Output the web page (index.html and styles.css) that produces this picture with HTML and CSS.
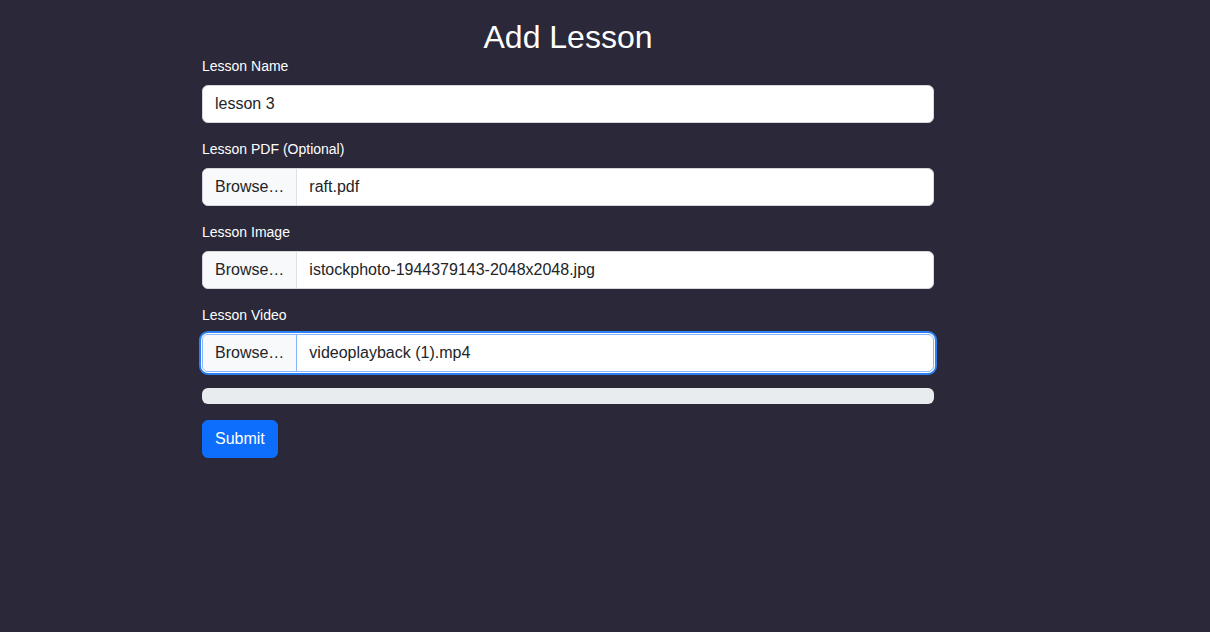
FILE: index.html
```html
<!DOCTYPE html>
<html lang="en">
<head>
<meta charset="utf-8">
<title>Add Lesson</title>
<link rel="stylesheet" href="styles.css">
</head>
<body>
<main class="container">
  <h1 class="title">Add Lesson</h1>
  <form class="form">
    <div class="field">
      <label class="form-label">Lesson Name</label>
      <div class="form-control">lesson 3</div>
    </div>
    <div class="field">
      <label class="form-label">Lesson PDF (Optional)</label>
      <div class="form-control file"><span class="file-btn">Browse…</span><span class="file-name">raft.pdf</span></div>
    </div>
    <div class="field">
      <label class="form-label">Lesson Image</label>
      <div class="form-control file"><span class="file-btn">Browse…</span><span class="file-name">istockphoto-1944379143-2048x2048.jpg</span></div>
    </div>
    <div class="field">
      <label class="form-label">Lesson Video</label>
      <div class="form-control file focused"><span class="file-btn">Browse…</span><span class="file-name">videoplayback (1).mp4</span></div>
    </div>
    <div class="progress"></div>
    <button type="button" class="btn-primary">Submit</button>
  </form>
</main>
</body>
</html>
```
FILE: styles.css
```css
html, body {
  margin: 0;
  padding: 0;
}
body {
  background: #2a2839;
  font-family: "Liberation Sans", Arial, sans-serif;
  color: #fff;
  height: 632px;
}
.container {
  width: 732px;
  margin-left: 202px;
}
.title {
  margin: 18px 0 0;
  font-size: 32px;
  line-height: 38px;
  font-weight: 400;
  text-align: center;
}
.form {
  display: flex;
  flex-direction: column;
}
.field {
  display: flex;
  flex-direction: column;
  margin-bottom: 16px;
}
.form-label {
  font-size: 14px;
  line-height: 21px;
  margin-bottom: 8px;
  color: #fff;
}
.form-control {
  box-sizing: border-box;
  height: 38px;
  background: #fff;
  border: 1px solid #d3d7dc;
  border-radius: 6px;
  padding: 6px 12px;
  font-size: 16px;
  line-height: 24px;
  color: #212529;
  white-space: nowrap;
}
.form-control.file {
  display: flex;
  padding: 0;
  overflow: hidden;
}
.file-btn {
  padding: 6px 12px;
  background: #f8f9fa;
  border-right: 1px solid #dee2e6;
  color: #212529;
}
.file-name {
  padding: 6px 12px;
}
.form-control.focused {
  border-color: #86b7fe;
  box-shadow: 0 0 0 1px #fff, 0 0 0 3px #2b80f6;
}
.form-control.focused .file-btn {
  border-right-color: #86b7fe;
}
.progress {
  height: 16px;
  background: #e9ecef;
  border-radius: 6px;
  margin-bottom: 16px;
}
.btn-primary {
  align-self: flex-start;
  height: 38px;
  padding: 6px 12px;
  background: #0d6efd;
  border: 1px solid #0d6efd;
  border-radius: 6px;
  color: #fff;
  font-family: inherit;
  font-size: 16px;
  line-height: 24px;
}
```
